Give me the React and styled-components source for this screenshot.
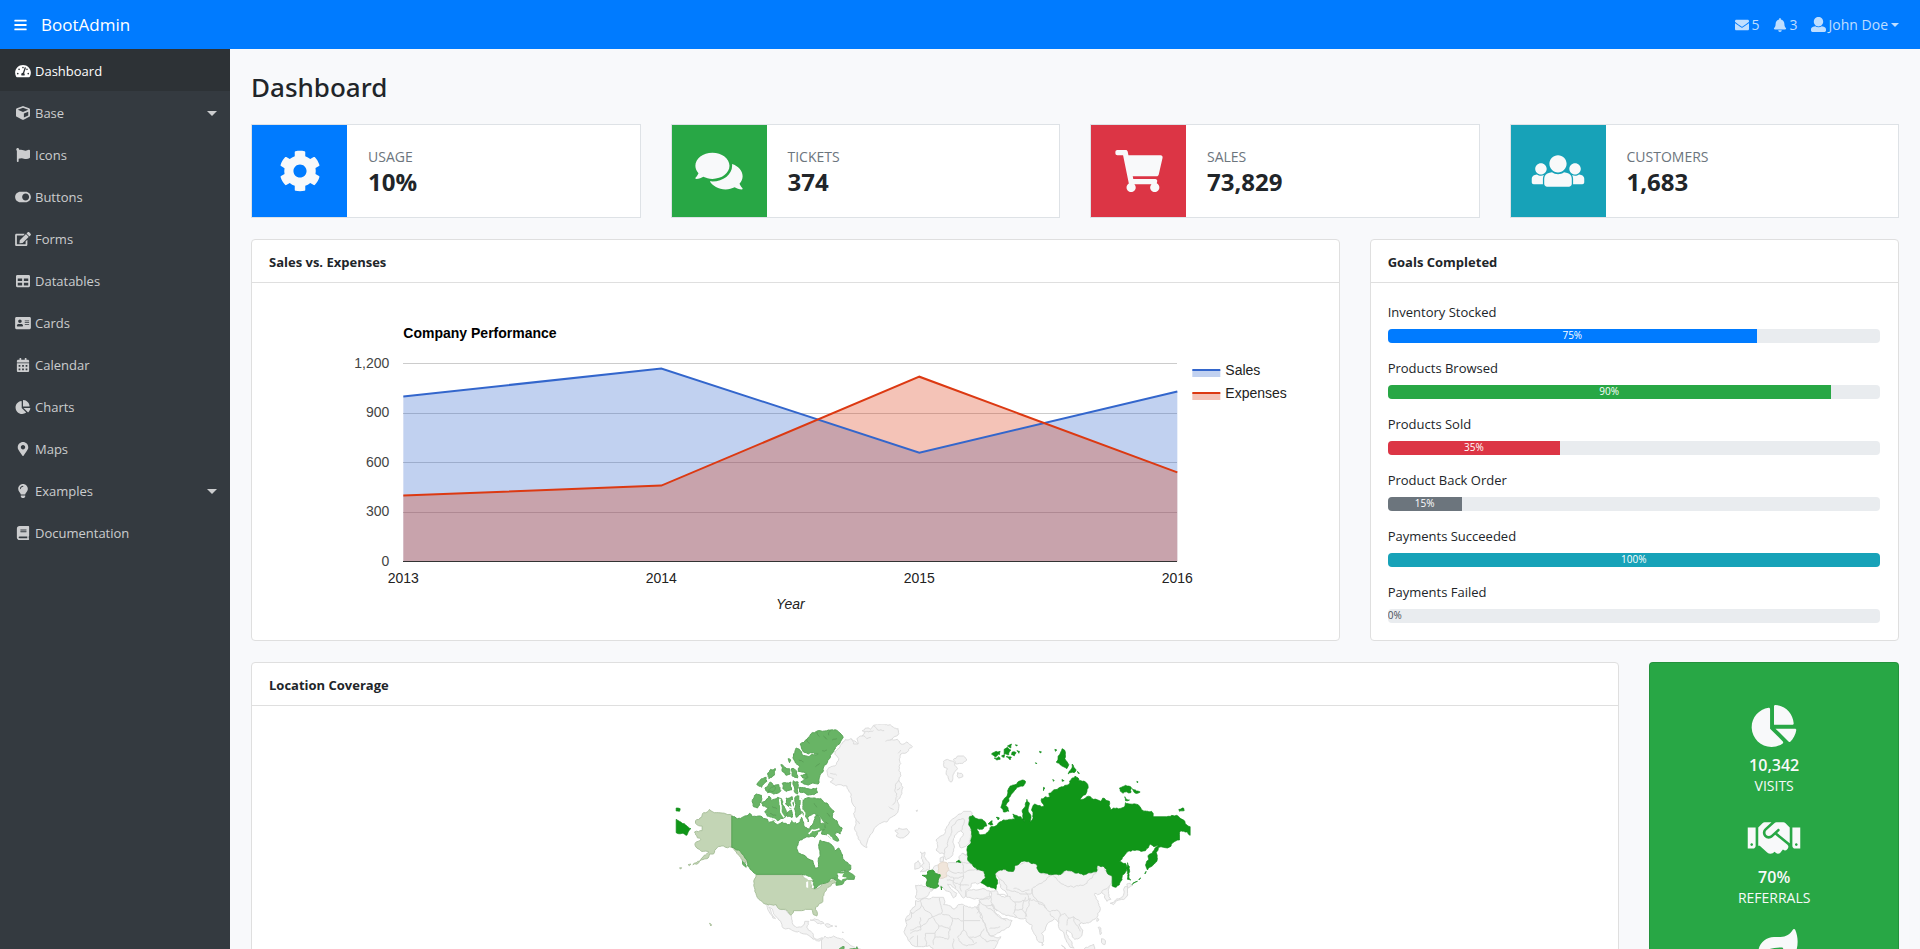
import React from 'react';
import styled, { createGlobalStyle } from 'styled-components';
import {
  FaBars, FaEnvelope, FaBell, FaTachometerAlt, FaCube, FaFlag, FaToggleOn, FaEdit, FaTable,
  FaAddressCard, FaCalendarAlt, FaChartPie, FaMapMarkerAlt, FaLightbulb, FaBook, FaCog, FaComments,
  FaShoppingCart, FaHandshake, FaLeaf,
} from 'react-icons/fa';

const colors = {
  primary: '#007bff',
  success: '#28a745',
  danger: '#dc3545',
  info: '#17a2b8',
  secondary: '#6c757d',
  dark: '#343a40',
  light: '#f8f9fa',
  text: '#212529',
  border: '#dfdfdf',
};

const GlobalStyle = createGlobalStyle`
  *, *::before, *::after { box-sizing: border-box; }
  body {
    margin: 0;
    background: #f8f9fb;
    color: ${colors.text};
    font: 400 13px/21px "Segoe UI", "Open Sans", "Noto Sans", sans-serif;
  }
  h1, h2, p, ul, dl, dd { margin: 0; padding: 0; }
  a { color: inherit; text-decoration: none; }
`;

const Page = styled.div`
  display: flex;
  flex-direction: column;
  height: 100vh;
`;

const Navbar = styled.header`
  display: flex;
  align-items: center;
  flex: none;
  height: 49px;
  padding: 0 21px 0 14px;
  background: ${colors.primary};
  color: #fff;
`;

const MenuButton = styled.button`
  display: flex;
  padding: 0;
  margin-right: 14px;
  border: 0;
  background: none;
  color: inherit;
  font-size: 14px;
  cursor: pointer;

  svg {
    width: 13px;
    height: 14px;
  }
`;

const Brand = styled.a`
  font-size: 17px;
  line-height: 27px;
`;

const UserNav = styled.nav`
  display: flex;
  gap: 13px;
  margin-left: auto;
  color: rgba(255, 255, 255, 0.75);
  font-size: 14px;
`;

const UserLink = styled.a`
  display: flex;
  align-items: center;
  gap: 3px;
`;

const Caret = styled.span`
  border: 4px solid transparent;
  border-top-color: currentColor;
  border-bottom: 0;
`;

const Body = styled.div`
  display: flex;
  flex: 1;
  min-height: 0;
`;

const Sidebar = styled.nav`
  flex: none;
  width: 230px;
  background: ${colors.dark};
  overflow-y: auto;
`;

const SideList = styled.ul`
  list-style: none;
`;

const SideLink = styled.a`
  display: flex;
  align-items: center;
  gap: 3px;
  height: 42px;
  padding: 2px 13px 0 14px;
  background: ${(p) => (p.$active ? '#2d3236' : 'transparent')};
  color: ${(p) => (p.$active ? '#fff' : 'rgba(255, 255, 255, 0.75)')};

  svg {
    width: 18px;
    height: 14px;
  }

  ${Caret} {
    margin-left: auto;
    border-width: 5px;
    border-bottom: 0;
  }
`;

const Main = styled.main`
  flex: 1;
  min-width: 0;
  padding: 21px;
  overflow-y: auto;
  scrollbar-width: none;
`;

const Title = styled.h1`
  margin-bottom: 19px;
  font-family: "Segoe UI", "Noto Sans", sans-serif;
  font-size: 26px;
  line-height: 35px;
  font-weight: 500;
`;

const Grid = styled.div`
  display: grid;
  grid-template-columns: repeat(12, minmax(0, 1fr));
  gap: 21px 30px;
`;

const StatCard = styled.section`
  grid-column: span 3;
  display: flex;
  height: 94px;
  border: 1px solid #dee2e6;
  background: #fff;
`;

const StatIcon = styled.div`
  display: flex;
  align-items: center;
  justify-content: center;
  width: 95px;
  background: ${(p) => p.$color};
  color: ${colors.light};

  svg {
    width: 54px;
    height: 42px;
  }
`;

const StatText = styled.div`
  display: flex;
  flex-direction: column;
  justify-content: center;
  padding-left: 21px;
`;

const StatLabel = styled.p`
  color: ${colors.secondary};
  font-size: 14px;
  line-height: 20px;
  text-transform: uppercase;
`;

const StatValue = styled.p`
  font-size: 24px;
  line-height: 29px;
  font-weight: 700;
`;

const Card = styled.section`
  grid-column: span ${(p) => p.$span};
  border: 1px solid ${colors.border};
  border-radius: 4px;
  background: #fff;
`;

const CardHeader = styled.h2`
  padding: 12px 17px 10px;
  border-bottom: 1px solid ${colors.border};
  font-size: 13px;
  line-height: 20px;
  font-weight: 700;
`;

const CardBody = styled.div`
  padding: 18px 18px 17px;
`;

const Drawing = styled.svg`
  display: block;
  width: 100%;
  height: ${(p) => p.$height}px;
  font: 14px "Liberation Sans", Arial, sans-serif;
`;

const Goals = styled.div`
  display: grid;
  gap: 14px;
  padding: 19px 18px 17px 17px;
`;

const GoalLabel = styled.p`
  margin-bottom: 6px;
`;

const Track = styled.div`
  display: flex;
  height: 14px;
  margin-bottom: 1px;
  border-radius: 4px;
  background: #e9ecef;
  font-size: 10px;
  line-height: 13px;
  overflow: hidden;
`;

const Goal = styled.div`
  &:last-child ${Track} {
    margin-bottom: 0;
  }
`;

const Fill = styled.div`
  background: ${(p) => p.$color};
  color: ${(p) => (p.$color ? '#fff' : '#495057')};
  text-align: center;
`;

const Highlights = styled.section`
  grid-column: span 2;
  display: flex;
  flex-direction: column;
  align-items: center;
  gap: 21px;
  padding: 42px 18px;
  border: 1px solid rgba(0, 0, 0, 0.125);
  border-radius: 4px;
  background: ${colors.success};
  color: ${colors.light};
`;

const Highlight = styled.div`
  text-align: center;

  svg {
    display: block;
    width: 54px;
    height: 42px;
    margin: 0 auto 8px;
  }
`;

const HighlightValue = styled.p`
  font-size: 16px;
  line-height: 21px;
  font-weight: 600;
`;

const HighlightLabel = styled.p`
  font-size: 14px;
  line-height: 20px;
`;

function UserIcon() {
  return (
    <svg width="15" height="15" viewBox="0 0 512 512" fill="currentColor" aria-hidden="true">
      <path d="M256 0c88.366 0 160 71.634 160 160s-71.634 160-160 160S96 248.366 96 160 167.634 0 256 0zm183.283 333.821l-71.313-17.828c-74.923 53.89-165.738 41.864-223.94 0l-71.313 17.828C29.981 344.505 0 382.903 0 426.955V464c0 26.51 21.49 48 48 48h416c26.51 0 48-21.49 48-48v-37.045c0-44.052-29.981-82.45-72.717-93.134z" />
    </svg>
  );
}

function UsersIcon() {
  return (
    <svg viewBox="0 0 640 512" fill="currentColor" aria-hidden="true">
      <path d="M320 64c57.99 0 105 47.01 105 105s-47.01 105-105 105-105-47.01-105-105S262.01 64 320 64zm113.463 217.366l-39.982-9.996c-49.168 35.365-108.766 27.473-146.961 0l-39.982 9.996C174.485 289.379 152 318.177 152 351.216V412c0 19.882 16.118 36 36 36h264c19.882 0 36-16.118 36-36v-60.784c0-33.039-22.485-61.837-54.537-69.85zM528 300c38.66 0 70-31.34 70-70s-31.34-70-70-70-70 31.34-70 70 31.34 70 70 70zm-416 0c38.66 0 70-31.34 70-70s-31.34-70-70-70-70 31.34-70 70 31.34 70 70 70zm24 112v-60.784c0-16.551 4.593-32.204 12.703-45.599-29.988 14.72-63.336 8.708-85.69-7.37l-26.655 6.664C14.99 310.252 0 329.452 0 351.477V392c0 13.255 10.745 24 24 24h112.169c-.109-1.32-.169-2.653-.169-4zm467.642-107.09l-26.655-6.664c-27.925 20.086-60.89 19.233-85.786 7.218C499.369 318.893 504 334.601 504 351.216V412c0 1.347-.068 2.678-.169 4H616c13.255 0 24-10.745 24-24v-40.523c0-22.025-14.99-41.225-36.358-46.567z" />
    </svg>
  );
}

const menu = [
  { label: 'Dashboard', icon: FaTachometerAlt, active: true },
  { label: 'Base', icon: FaCube, caret: true },
  { label: 'Icons', icon: FaFlag },
  { label: 'Buttons', icon: FaToggleOn },
  { label: 'Forms', icon: FaEdit },
  { label: 'Datatables', icon: FaTable },
  { label: 'Cards', icon: FaAddressCard },
  { label: 'Calendar', icon: FaCalendarAlt },
  { label: 'Charts', icon: FaChartPie },
  { label: 'Maps', icon: FaMapMarkerAlt },
  { label: 'Examples', icon: FaLightbulb, caret: true },
  { label: 'Documentation', icon: FaBook },
];

const stats = [
  { label: 'Usage', value: '10%', icon: FaCog, color: colors.primary },
  { label: 'Tickets', value: '374', icon: FaComments, color: colors.success },
  { label: 'Sales', value: '73,829', icon: FaShoppingCart, color: colors.danger },
  { label: 'Customers', value: '1,683', icon: UsersIcon, color: colors.info },
];

const goals = [
  { label: 'Inventory Stocked', value: 75, color: colors.primary },
  { label: 'Products Browsed', value: 90, color: colors.success },
  { label: 'Products Sold', value: 35, color: colors.danger },
  { label: 'Product Back Order', value: 15, color: colors.secondary },
  { label: 'Payments Succeeded', value: 100, color: colors.info },
  { label: 'Payments Failed', value: 0 },
];

const highlights = [
  { icon: FaChartPie, value: '10,342', label: 'VISITS' },
  { icon: FaHandshake, value: '70%', label: 'REFERRALS' },
  { icon: FaLeaf },
];

/* ---- Area chart ---- */

const years = [2013, 2014, 2015, 2016];
const series = [
  { name: 'Sales', color: '#3366cc', values: [1000, 1170, 660, 1030] },
  { name: 'Expenses', color: '#dc3912', values: [400, 460, 1120, 540] },
];
const plot = { left: 108, right: 882, top: 62, bottom: 260 };
const xAt = (i) => plot.left + (i * (plot.right - plot.left)) / (years.length - 1);
const yAt = (v) => plot.bottom + 0.5 - (v * (plot.bottom - plot.top)) / 1200;

function AreaChart() {
  return (
    <Drawing $height={322} viewBox="0 0 1000 322" role="img" aria-label="Company Performance">
      <text x={plot.left} y={37} fontWeight="700">Company Performance</text>
      {[0, 300, 600, 900, 1200].map((v) => (
        <g key={v}>
          {v > 0 && <rect x={plot.left} y={Math.round(yAt(v) - 0.5)} width={plot.right - plot.left} height={1} fill="#ccc" shapeRendering="crispEdges" />}
          <text x={plot.left - 14} y={Math.round(yAt(v)) + 4} textAnchor="end" fill="#444">{v.toLocaleString('en-US')}</text>
        </g>
      ))}
      {series.map((s) => (
        <polygon
          key={s.name}
          fill={s.color}
          fillOpacity={0.3}
          points={[...s.values.map((v, i) => `${xAt(i)},${yAt(v)}`), `${plot.right},${yAt(0)}`, `${plot.left},${yAt(0)}`].join(' ')}
        />
      ))}
      <rect x={plot.left} y={plot.bottom} width={plot.right - plot.left} height={1} fill="#333" shapeRendering="crispEdges" />
      {series.map((s) => (
        <polyline key={s.name} fill="none" stroke={s.color} strokeWidth={2} points={s.values.map((v, i) => `${xAt(i)},${yAt(v)}`).join(' ')} />
      ))}
      {years.map((y, i) => (
        <text key={y} x={xAt(i)} y={282} textAnchor="middle" fill="#222">{y}</text>
      ))}
      <text x={(plot.left + plot.right) / 2} y={308} textAnchor="middle" fontStyle="italic" fill="#222">Year</text>
      {series.map((s, i) => (
        <g key={s.name}>
          <rect x={897} y={69 + i * 23} width={28} height={7} fill={s.color} fillOpacity={0.3} />
          <rect x={897} y={68 + i * 23} width={28} height={2} fill={s.color} />
          <text x={930} y={74 + i * 23} fill="#222">{s.name}</text>
        </g>
      ))}
    </Drawing>
  );
}

/* ---- World map: outlines as flat lists of x y pairs ---- */

const EAST = 720;

const noise = (a, b) => {
  const s = Math.sin(a * 12.9898 + b * 78.233) * 43758.5453;
  return (s - Math.floor(s)) * 2 - 1;
};

// Breaks a straight edge into small irregular ones so that it reads as a coastline.
function splitEdge(x1, y1, x2, y2, out) {
  const dx = x2 - x1;
  const dy = y2 - y1;
  const len = Math.hypot(dx, dy);
  if (len < 7 || dx === 0 || dy === 0) {
    out.push(`${x2.toFixed(1)},${y2.toFixed(1)}`);
    return;
  }
  const k = noise(x1 + x2, y1 + y2) * Math.min(0.18, 4 / len);
  const mx = (x1 + x2) / 2 - dy * k;
  const my = (y1 + y2) / 2 + dx * k;
  splitEdge(x1, y1, mx, my, out);
  splitEdge(mx, my, x2, y2, out);
}

function coast(text, shift = 0, closed = true) {
  const n = text.trim().split(/\s+/).map(Number);
  const pts = [];
  for (let i = 0; i < n.length; i += 2) pts.push([n[i] + shift, n[i + 1]]);
  const out = [`${pts[0][0]},${pts[0][1]}`];
  const last = closed ? pts.length : pts.length - 1;
  for (let i = 0; i < last; i += 1) {
    const a = pts[i];
    const b = pts[(i + 1) % pts.length];
    splitEdge(a[0], a[1], b[0], b[1], out);
  }
  return `M${out.join('L')}${closed ? 'Z' : ''}`;
}

const land = (list, shift) => list.map((t) => coast(t, shift)).join('');
const lines = (list, shift) => list.map((t) => coast(t, shift, false)).join('');

const greyWest = land([
  // Greenland, Iceland, Faroe
  '606 92 616 84 630 88 640 76 662 72 690 74 700 82 714 86 716 100 700 112 690 120 712 118 722 132 740 126 757 140 745 152 734 160 722 162 718 176 722 190 716 210 722 226 716 240 728 262 722 286 712 300 716 320 714 332 700 348 680 366 652 376 638 396 624 416 620 443 604 432 590 404 584 380 588 360 580 340 586 322 574 300 572 280 560 258 540 254 526 256 510 246 520 236 504 230 500 212 510 202 524 198 536 176 524 162 530 150 540 136 556 118 572 116 594 132 590 116 606 108 614 98',
  '704 392 712 390 716 384 728 388 740 386 748 396 738 408 720 414 708 408 714 400',
  '768 332 772 330 770 335',
  // Mexico and Central America
  '316 612 348 614 362 628 376 630 392 646 396 668 408 682 426 680 434 664 446 664 440 682 454 696 460 712 472 718 488 714 480 722 466 720 452 712 434 702 416 694 398 692 380 686 366 680 356 660 340 642 332 624 326 622 346 656 338 654 326 634',
  // Caribbean
  '450 660 464 656 478 662 492 670 482 672 466 664', '494 674 506 672 518 678 506 682', '524 678 530 678 528 681', '546 696 550 697 548 699',
  // South America
  '484 720 494 708 504 714 520 708 532 714 548 716 562 728 580 740 606 752 640 776 650 800 640 860 600 900 580 960 550 1000 530 1100 505 1100 508 980 500 900 474 850 460 810 476 770 484 744',
  // British Isles
  '780 456 788 460 794 456 792 470 798 480 808 496 808 508 796 514 780 516 790 506 784 498 792 490 784 476', '764 490 774 482 780 490 778 504 764 508',
  // Iberia
  '766 556 800 560 820 568 808 576 800 590 784 598 766 592 770 576',
]);

const greyEast = land([
  // Svalbard
  '130 184 146 180 160 184 164 196 172 206 162 218 158 232 154 246 144 234 138 218 142 206 132 202', '160 178 172 168 190 168 200 180 188 190 168 192', '172 218 184 220 188 230 176 234',
  // Scandinavia
  '108 420 118 410 134 400 140 380 152 362 172 346 190 334 212 334 216 342 208 350 210 380 214 400 208 430 196 440 180 442 174 428 184 412 190 400 182 392 170 400 160 416 162 436 158 458 148 474 138 480 132 462 118 460 108 450 112 434',
  // Denmark
  '120 474 130 470 130 484 120 486',
  // Central and eastern Europe
  '96 510 104 498 116 494 120 512 144 488 168 488 184 486 176 470 186 460 204 462 216 492 230 508 252 514 254 532 242 546 232 552 226 548 214 550 206 566 196 572 198 584 190 594 182 584 170 570 152 554 142 552 160 574 170 580 160 594 154 584 136 572 124 558 114 560 112 544 120 530',
  // Turkey
  '196 578 214 570 240 568 270 574 272 592 240 598 218 596 200 592',
  // Mainland Asia
  '284 522 300 510 340 514 345 496 376 484 408 492 420 518 455 524 486 520 498 510 520 516 560 522 590 514 594 496 612 500 620 516 636 530 634 548 624 570 626 590 632 598 620 604 614 586 604 578 592 584 584 580 588 596 596 612 600 630 590 652 572 666 556 670 542 668 536 674 548 690 540 712 524 718 514 700 500 690 504 708 514 724 522 744 510 742 498 720 490 696 480 690 476 668 462 656 452 664 436 684 424 700 428 728 416 726 404 704 396 676 384 668 376 654 350 652 330 648 306 642 290 630 274 612 286 640 304 656 320 656 336 662 326 682 296 698 268 706 256 680 240 650 230 626 238 606 240 598 272 592 270 574 290 572 304 590 322 588 310 570 298 550 296 534',
  // Japan, Taiwan, Philippines, Ceylon
  '674 560 682 560 682 580 674 596 656 600 640 614 630 610 646 600 664 592 672 578', '680 552 690 550 698 556 684 564', '592 654 596 660 590 664', '594 682 602 684 604 698 600 704', '604 716 616 722 614 734 604 728', '426 728 430 734 426 738',
  // Indonesia
  '552 748 566 740 580 732 584 744 574 770 556 768', '484 736 500 750 530 780 520 784 500 764',
  // Africa
  '46 602 72 594 104 592 130 592 134 604 130 614 150 618 162 628 174 614 196 618 234 622 238 636 246 656 258 684 272 708 286 712 302 710 292 730 270 760 240 800 244 850 210 890 190 950 150 970 134 950 120 880 124 830 108 790 104 756 88 736 64 740 46 740 30 726 16 706 14 690 18 668 16 660 30 632 46 616',
  // Madagascar
  '262 860 272 880 256 930 244 920',
], EAST);

const borders = lines([
  // African frontiers
  '62 600 64 616 34 640', '34 636 34 652 16 664', '64 616 96 650', '60 652 62 690', '96 650 60 680 30 690', '118 594 124 640 96 650', '96 650 116 678 104 700 76 700', '124 640 156 654 150 690 116 678', '190 618 190 662', '190 662 240 662', '190 662 156 654', '190 662 190 690 172 712', '104 700 100 734', '150 690 144 718 104 712', '190 690 206 712 240 706', '172 712 190 734 230 728', '206 712 220 728', '240 706 252 686', '240 706 260 726 290 724', '52 706 52 738', '76 700 78 738', '40 708 28 720', '160 716 162 760', '62 690 30 700',
  // Middle East
  '236 600 254 616 278 614', '240 612 230 640', '256 616 300 650', '300 650 318 662', '268 686 300 680', '272 592 290 634', '290 582 330 590 344 606', '344 606 340 640 350 652', '344 606 392 596', '376 592 366 628 342 630', '366 628 380 650',
  // Central Asia
  '300 536 320 570 366 582', '340 566 372 574 388 570', '366 582 392 582 396 566', '396 566 430 544 456 524', '396 566 402 592 440 626', '376 576 386 600 402 598', '388 600 376 650', '402 600 416 612 450 636 470 630', '450 640 462 654', '470 630 480 648 476 668',
  // Mongolia, China, Korea
  '456 524 484 552 520 562 560 550 590 516', '480 648 494 640 506 654 520 650 540 664', '506 654 500 676', '520 650 530 676 540 694', '604 578 626 560',
  // Europe
  '132 462 144 420 154 380 172 360 190 356', '190 356 184 392', '118 536 146 528 168 534 190 528', '144 510 168 520 186 518', '186 490 190 528 182 548', '186 460 206 470', '182 486 200 490 216 492', '190 516 216 510 252 516', '140 540 172 550 206 556', '160 534 166 566', '180 548 184 574',
], EAST);

const canada = land([
  // Mainland and Labrador
  '215 348 232 356 250 350 268 340 276 350 300 348 322 358 326 368 340 364 352 374 366 366 388 374 396 360 410 372 420 366 424 352 430 366 436 382 450 386 458 372 464 350 472 346 480 354 480 370 494 374 492 390 476 394 464 412 440 410 420 420 410 440 414 458 436 468 458 482 464 504 472 504 474 484 480 466 476 440 480 420 496 426 516 436 524 452 536 444 544 460 552 480 572 496 570 510 540 516 524 534 546 516 564 514 584 530 582 538 562 538 550 550 528 556 530 544 520 534 504 546 462 566 460 540 446 532 425 523 288 523 270 508 262 486 250 466 236 450 215 442',
  // Baffin
  '430 300 448 293 482 296 490 306 506 318 522 334 516 348 530 362 546 384 540 402 528 396 524 404 536 422 522 424 506 410 484 402 496 384 490 364 478 348 462 340 446 348 444 366 430 346 426 322',
  // Victoria and Banks
  '288 282 304 286 302 306 292 324 280 320 276 306', '304 308 318 300 326 288 334 302 352 292 364 296 368 316 378 332 374 352 352 362 322 350 314 334 326 324 308 318',
  // Prince of Wales, Somerset, King William
  '378 294 396 290 400 316 390 326 376 312', '406 290 420 288 426 300 418 322 424 340 408 352 402 326', '380 338 394 330 396 352 382 350',
  // Queen Elizabeth Islands
  '290 254 304 236 318 232 320 244 304 262', '314 264 330 246 346 262 340 274 322 276', '334 262 356 254 362 272 340 282 322 278', '322 222 332 208 346 206 342 226 326 236', '362 194 374 202 388 206 390 222 378 226 366 214', '394 206 410 214 412 234 396 228', '366 250 392 246 394 270 380 274 368 266', '400 242 414 246 412 282 402 272', '384 176 392 180 388 188', '418 262 440 266 470 264 472 278 440 284 418 276', '422 226 440 222 444 232 428 234',
  // Ellesmere and Axel Heiberg
  '420 132 440 118 456 98 480 92 505 90 535 95 549 112 540 128 526 142 518 158 508 176 492 196 490 212 478 232 474 252 440 254 422 246 442 234 436 218 414 214 418 200 404 184 400 162 408 144 418 148 426 164 446 170 474 162 460 158 444 162 430 156 424 144',
  '246 482 254 490 258 502 250 496',
]);

const usa = land([
  '288 524 425 524 434 534 446 532 458 542 452 562 462 567 480 560 504 546 520 534 526 548 508 560 496 574 488 590 488 604 466 622 470 648 460 644 456 628 436 628 424 632 400 632 392 646 376 628 360 628 348 614 316 612 296 598 284 574 282 550',
  '148 328 168 338 215 346 215 442 190 438 172 442 160 462 148 462 140 476 98 494 118 484 132 466 146 456 124 454 110 444 105 430 122 418 106 404 103 396 126 392 126 378 106 370 106 362 124 352 130 338',
  '215 442 232 444 246 460 260 476 258 490 244 478 230 460', '148 670 154 674 152 678', '58 504 64 503 62 507', '84 494 92 492 88 497',
]);

const russia = land([
  '208 350 218 346 236 358 250 362 260 378 246 388 230 386 236 402 246 404 264 396 272 380 290 376 298 366 322 360 345 358 338 342 362 350 374 366 366 336 376 318 380 298 388 310 384 334 392 346 388 368 396 360 394 330 404 312 424 320 432 318 424 296 450 292 446 280 480 262 508 252 514 236 526 228 536 242 556 246 564 264 556 284 540 300 560 290 580 298 602 304 608 294 628 304 632 330 650 324 670 322 676 308 690 312 714 314 724 330 754 334 760 350 800 350 830 346 850 360 870 380 870 406 860 396 842 392 838 404 838 420 818 428 802 444 776 442 768 458 772 476 756 498 742 510 738 490 746 464 774 434 762 440 750 432 736 452 710 450 684 454 658 484 676 490 674 520 662 544 648 562 636 558 636 530 620 516 612 500 594 496 590 514 560 522 520 516 498 510 486 520 455 524 420 518 408 492 376 484 345 496 340 514 300 510 284 522 292 540 288 568 262 560 242 548 256 532 252 514 230 508 216 492 202 476 200 450 212 430 214 400 206 370',
  // Novaya Zemlya
  '302 322 312 296 326 264 350 252 366 240 376 244 370 258 344 270 330 290 316 316 326 334 310 336',
  // Sakhalin, Kurils, Kaliningrad
  '682 488 688 500 686 520 692 540 682 538 680 510', '696 554 712 544 706 546', '716 540 722 534 718 536', '734 522 738 514 736 516', '168 486 176 480 182 488',
  // Franz Josef Land
  '274 162 288 154 296 162 286 172', '290 158 300 154 298 164', '312 148 322 142 332 150 326 164 312 162', '322 138 334 132 332 144', '282 174 296 170 300 178 290 180', '336 156 348 158 342 168 334 164', '350 152 358 154 356 160', '318 170 334 172 330 180', '346 134 352 136 348 138', '304 168 314 164 312 172',
  // Severnaya Zemlya
  '486 146 496 158 494 176 506 194 500 206 480 194 468 186 474 168', '516 192 528 210 522 218 504 222', '464 148 470 150 466 154', '418 154 424 156 420 159', '406 188 410 190 408 192', '532 214 538 220 534 220',
  // New Siberian Islands and Wrangel
  '658 264 676 256 694 264 692 278 668 280', '696 266 706 270 720 276 712 280 700 274', '674 290 688 300 676 302', '836 328 850 324 852 332 838 334', '710 244 714 246 711 248',
  // Kara Sea islets
  '430 262 434 264 430 272', '458 238 462 242 460 244', '486 238 492 242 486 244', '264 372 276 362 278 374', '288 352 298 354 294 360',
], EAST) + land(['48 358 66 370 78 376 92 386 84 396 80 406 66 400 48 398', '48 324 60 326 58 334 48 333']);

const france = land(['66 526 80 526 82 516 96 510 104 518 120 524 114 542 116 558 98 564 80 558 82 540', '122 560 126 562 124 570'], EAST);
const germany = land(['118 490 128 486 140 488 146 508 138 518 140 530 120 534 114 512'], EAST);
const brazil = land(['538 746 544 742 552 740 553 750 586 746 590 740 594 748 640 776 650 800 640 860 600 900 560 920 545 860 500 810 510 770']);
const lakes = land(['428 534 446 530 456 540 444 540', '438 546 444 544 444 564 438 562', '452 544 460 548 456 558', '532 520 552 518 546 530 560 534 544 542 534 536']);
const inlets = lines(['360 296 362 330 372 352', '396 300 398 360 404 366', '424 296 424 330 436 358', '420 300 420 280', '446 402 456 390 478 386', '386 320 400 322', '500 404 530 436', '320 352 350 366']);
const ridges = lines(['440 118 448 130', '470 96 478 110', '510 90 506 106', '490 108 500 118', '530 116 516 120', '500 150 486 152', '478 190 466 200', '416 180 430 186', '500 340 510 350', '504 372 496 366', '462 310 470 322', '336 320 350 326', '330 340 348 346']);
const fjords = lines(['572 116 580 132 594 132', '606 108 620 116 632 112', '640 78 652 90 672 92', '612 94 640 92', '690 120 676 124', '716 240 706 260 710 290 696 316', '700 330 686 320', '588 360 598 372', '720 262 710 270', '722 150 714 160', '510 220 530 226']);

function WorldMap() {
  return (
    <Drawing $height={350} viewBox="-15 72 1680 1050" role="img" aria-label="Location Coverage">
      <g strokeWidth={3} strokeLinejoin="round">
        <path d={greyWest + greyEast} fill="#f3f3f3" stroke="#dcdcdc" />
        <path d={borders + fjords} fill="none" stroke="#dcdcdc" />
        <path d={brazil} fill="#6bb567" stroke="#5fa15c" />
        <path d={usa} fill="#c3d5b5" stroke="#a9c09b" />
        <path d={canada} fill="#68b465" stroke="#5ba559" />
        <path d={ridges} fill="none" stroke="#5a9f57" />
        <path d={lakes} fill="#fff" stroke="none" />
        <path d={inlets} fill="none" stroke="#fff" strokeWidth={5} />
        <path d={germany} fill="#f0e5da" stroke="#e3d8cc" />
        <path d={france} fill="#40a640" stroke="#369936" />
        <path d={russia} fill="#109618" stroke="#0e8a16" strokeWidth={2} />
      </g>
    </Drawing>
  );
}

export default function App() {
  return (
    <Page>
      <GlobalStyle />
      <Navbar>
        <MenuButton type="button" aria-label="Toggle menu"><FaBars /></MenuButton>
        <Brand href="#home">BootAdmin</Brand>
        <UserNav aria-label="Account">
          <UserLink href="#messages"><FaEnvelope />5</UserLink>
          <UserLink href="#alerts"><FaBell />3</UserLink>
          <UserLink href="#account"><UserIcon />John Doe<Caret /></UserLink>
        </UserNav>
      </Navbar>
      <Body>
        <Sidebar aria-label="Main menu">
          <SideList>
            {menu.map(({ label, icon: Icon, active, caret }) => (
              <li key={label}>
                <SideLink href={`#${label.toLowerCase()}`} $active={active}>
                  <Icon />
                  {label}
                  {caret && <Caret />}
                </SideLink>
              </li>
            ))}
          </SideList>
        </Sidebar>
        <Main>
          <Title>Dashboard</Title>
          <Grid>
            {stats.map(({ label, value, icon: Icon, color }) => (
              <StatCard key={label}>
                <StatIcon $color={color}><Icon /></StatIcon>
                <StatText>
                  <StatLabel>{label}</StatLabel>
                  <StatValue>{value}</StatValue>
                </StatText>
              </StatCard>
            ))}
            <Card $span={8}>
              <CardHeader>Sales vs. Expenses</CardHeader>
              <CardBody><AreaChart /></CardBody>
            </Card>
            <Card $span={4}>
              <CardHeader>Goals Completed</CardHeader>
              <Goals>
                {goals.map(({ label, value, color }, i) => (
                  <Goal key={label}>
                    <GoalLabel id={`goal-${i}`}>{label}</GoalLabel>
                    <Track role="progressbar" aria-labelledby={`goal-${i}`} aria-valuenow={value} aria-valuemin={0} aria-valuemax={100}>
                      <Fill $color={color} style={{ width: `${value}%` }}>{value}%</Fill>
                    </Track>
                  </Goal>
                ))}
              </Goals>
            </Card>
            <Card $span={10}>
              <CardHeader>Location Coverage</CardHeader>
              <CardBody><WorldMap /></CardBody>
            </Card>
            <Highlights>
              {highlights.map(({ icon: Icon, value, label }, i) => (
                <Highlight key={i}>
                  <Icon />
                  {value && <HighlightValue>{value}</HighlightValue>}
                  {label && <HighlightLabel>{label}</HighlightLabel>}
                </Highlight>
              ))}
            </Highlights>
          </Grid>
        </Main>
      </Body>
    </Page>
  );
}
